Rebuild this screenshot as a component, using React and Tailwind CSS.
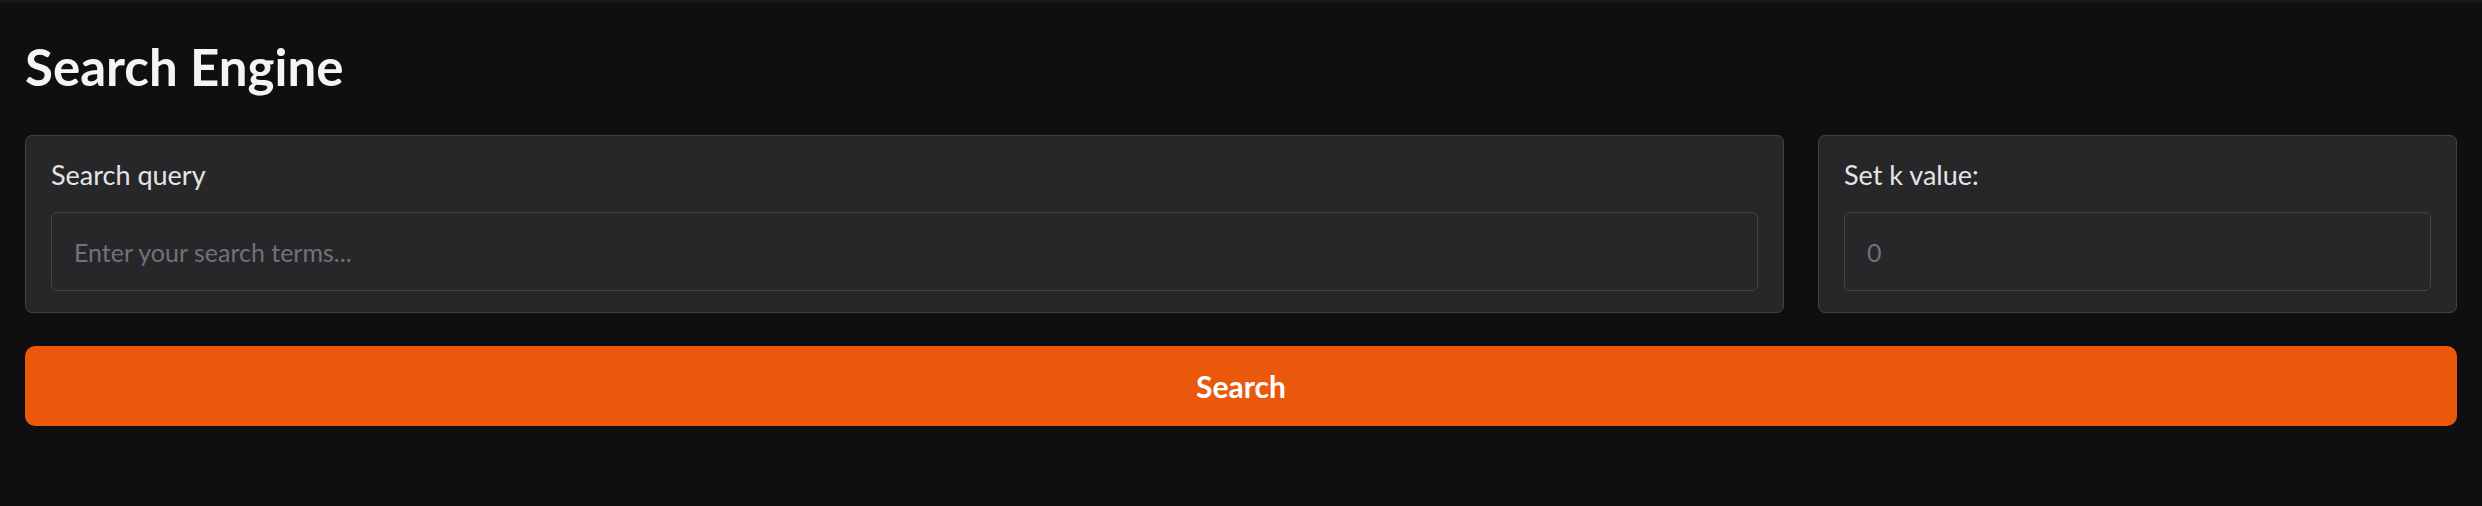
export default function App() {
  const font = { fontFamily: 'Lato, "Noto Sans", sans-serif' };
  return (
    <div
      className="min-h-[506px] w-full bg-[#0f0f11] border-t-[3px] border-[#18181b] px-[25px]"
      style={font}
    >
      <h1 className="pt-[34px] text-[51px] leading-[60px] font-bold text-[#f4f4f5]">
        Search Engine
      </h1>
      <div className="mt-[38px] flex gap-[34px]">
        <div className="flex-1 rounded-[7px] border border-[#404047] bg-[#27272a] px-[25px] pt-[21px] pb-[21px]">
          <div className="text-[27px] leading-[36px] text-[#e4e4e7] mb-[19px]">Search query</div>
          <div className="h-[79px] rounded-[6px] border border-[#434349] bg-[#27272a] pl-[22px] flex items-center">
            <span className="text-[25px] leading-[36px] text-[#71717a]">Enter your search terms...</span>
          </div>
        </div>
        <div className="w-[639px] rounded-[7px] border border-[#404047] bg-[#27272a] px-[25px] pt-[21px] pb-[21px]">
          <div className="text-[27px] leading-[36px] text-[#e4e4e7] mb-[19px]">Set k value:</div>
          <div className="h-[79px] rounded-[6px] border border-[#434349] bg-[#27272a] pl-[22px] flex items-center">
            <span className="text-[25px] leading-[36px] text-[#71717a]">0</span>
          </div>
        </div>
      </div>
      <button className="mt-[33px] w-full h-[80px] rounded-[10px] bg-[#ea580c] text-white text-[30px] font-bold flex items-center justify-center">
        Search
      </button>
    </div>
  );
}
